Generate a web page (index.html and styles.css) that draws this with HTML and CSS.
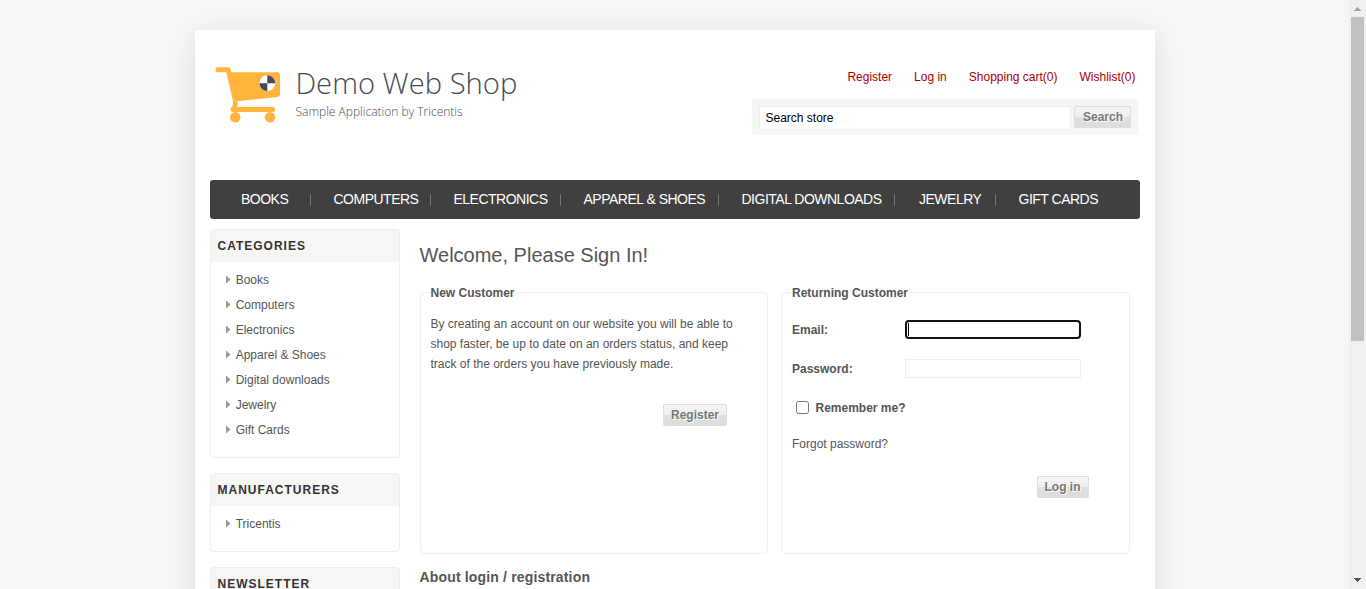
FILE: index.html
```html
<!DOCTYPE html>
<html lang="en">
<head>
<meta charset="utf-8">
<title>Demo Web Shop. Login</title>
<link rel="stylesheet" href="styles.css">
</head>
<body>
<div class="viewport">
  <div class="page-area">
    <div class="page">
      <header class="header">
        <a class="logo">
          <svg class="logo-cart" width="66" height="58" viewBox="0 0 66 58">
            <g fill="#ffb43b">
              <path d="M3 1.300H13.200Q15 1.300 15.600 3L16.200 6.200H62.500Q65 6.200 65 8.700V28.600Q65 30.800 62.800 31L22.300 35.200Q23.300 38.500 21.800 41H57.500Q60 41 60 43.400Q60 46 57.500 46H18Q15.500 46 15.500 43.500Q15.500 41.500 17.200 40.300Q18.600 37.500 17.800 34.500L11.300 6.200H3Q.5 6.200 .5 3.700Q.5 1.300 3 1.300Z"/>
              <circle cx="20.300" cy="51.200" r="5.200"/>
              <circle cx="55" cy="51.200" r="5.200"/>
            </g>
            <circle cx="52.300" cy="17.200" r="7.900" fill="#fff"/>
            <path d="M52.300 17.200V9.300A7.900 7.900 0 0 1 60.200 17.200ZM52.300 17.200V25.100A7.900 7.900 0 0 1 44.400 17.200Z" fill="#464a58"/>
          </svg>
          <span class="logo-text">
            <span class="logo-name">Demo Web Shop</span>
            <span class="logo-tag">Sample Application by Tricentis</span>
          </span>
        </a>
        <div class="header-side">
          <ul class="header-links">
            <li><a>Register</a></li>
            <li><a>Log in</a></li>
            <li><a>Shopping cart(0)</a></li>
            <li><a>Wishlist(0)</a></li>
          </ul>
          <form class="search-box">
            <input class="search-input" type="text" value="Search store">
            <button class="button search-button" type="button">Search</button>
          </form>
        </div>
      </header>
      <nav>
        <ul class="menu">
          <li class="first"><span>Books</span></li>
          <li><span>Computers</span></li>
          <li><span>Electronics</span></li>
          <li><span>Apparel &amp; Shoes</span></li>
          <li><span>Digital downloads</span></li>
          <li class="wide"><span>Jewelry</span></li>
          <li><span>Gift Cards</span></li>
        </ul>
      </nav>
      <div class="columns">
        <aside class="sidebar">
          <section class="block">
            <h2 class="block-title">Categories</h2>
            <ul class="block-list">
              <li>Books</li>
              <li>Computers</li>
              <li>Electronics</li>
              <li>Apparel &amp; Shoes</li>
              <li>Digital downloads</li>
              <li>Jewelry</li>
              <li>Gift Cards</li>
            </ul>
          </section>
          <section class="block">
            <h2 class="block-title">Manufacturers</h2>
            <ul class="block-list">
              <li>Tricentis</li>
            </ul>
          </section>
          <section class="block">
            <h2 class="block-title">Newsletter</h2>
            <ul class="block-list"></ul>
          </section>
        </aside>
        <main class="content">
          <h1 class="page-title">Welcome, Please Sign In!</h1>
          <div class="customer-blocks">
            <section class="panel">
              <strong class="panel-title">New Customer</strong>
              <p class="panel-text">By creating an account on our website you will be able to shop faster, be up to date on an orders status, and keep track of the orders you have previously made.</p>
              <div class="panel-actions register-actions">
                <button class="button" type="button">Register</button>
              </div>
            </section>
            <section class="panel returning">
              <strong class="panel-title">Returning Customer</strong>
              <div class="field-row">
                <span class="field-label">Email:</span>
                <span class="field focused"><span class="caret"></span></span>
              </div>
              <div class="field-row">
                <span class="field-label">Password:</span>
                <span class="field"></span>
              </div>
              <label class="remember"><input class="checkbox" type="checkbox">Remember me?</label>
              <a class="forgot">Forgot password?</a>
              <div class="panel-actions login-actions">
                <button class="button" type="button">Log in</button>
              </div>
            </section>
          </div>
          <h3 class="topic-title">About login / registration</h3>
        </main>
      </div>
    </div>
  </div>
  <div class="scrollbar">
    <svg class="arrow" width="17" height="17" shape-rendering="crispEdges"><path d="M8 7h1v1h1v1h1v1h1v1H5v-1h1V9h1V8h1z" fill="#a3a3a3"/></svg>
    <div class="thumb"></div>
    <svg class="arrow arrow-down" width="17" height="17" shape-rendering="crispEdges"><path d="M5 6h7v1h-1v1h-1v1H9v1H8V9H7V8H6V7H5z" fill="#505050"/></svg>
  </div>
</div>
</body>
</html>
```
FILE: styles.css
```css
* { box-sizing: border-box; margin: 0; padding: 0; }
ul { list-style: none; }
body {
  background: #f6f6f5;
  color: #555;
  font: 12px/20px "Liberation Sans", Arial, sans-serif;
}
.viewport { display: flex; height: 589px; overflow: hidden; }

.page-area { flex: 1; padding-top: 30px; overflow: hidden; }
.page {
  width: 960px;
  height: 700px;
  margin: 0 auto;
  padding: 0 15px;
  background: #fff;
  box-shadow: 0 5px 25px rgba(0, 0, 0, .09);
}

/* Header */
.header { display: flex; justify-content: space-between; height: 150px; }
.logo { display: flex; padding: 36px 0 0 5px; }
.logo-text {
  display: flex;
  flex-direction: column;
  padding-left: 15px;
  font-family: "Open Sans", sans-serif;
  font-weight: 300;
  color: #464a58;
}
.logo-name { font-size: 29.2px; line-height: 34px; white-space: nowrap; }
.logo-tag { font-size: 12px; line-height: 16px; padding-top: 4px; white-space: nowrap; }
.header-side { width: 386px; margin-right: 2px; padding-top: 37px; }
.header-links { display: flex; justify-content: flex-end; gap: 22px; padding-right: 2px; color: #a00; }
.search-box {
  display: flex;
  gap: 3px;
  align-items: flex-start;
  height: 36px;
  margin-top: 12px;
  padding: 7px;
  border-radius: 3px;
  background: #f6f6f5;
}
.search-input {
  width: 312px;
  height: 24px;
  padding: 0 6px;
  border: 1px solid #eee;
  background: #fff;
  color: #000;
  font: 12px "Liberation Sans", Arial, sans-serif;
}
.button {
  height: 22px;
  padding: 0 7px 1px;
  border: 1px solid #ddd;
  border-radius: 2px;
  background: linear-gradient(#f6f6f6 0%, #eee 49%, #e0e0e0 51%, #dcdcdc 100%);
  color: #777;
  font: bold 12px "Liberation Sans", Arial, sans-serif;
  text-shadow: 1px 1px 0 #fff;
}
.search-button { width: 57px; padding: 0 0 1px 2px; }

/* Menu */
.menu {
  display: grid;
  grid-template-columns: 101px 120px 130px 158px 176px 101px 1fr;
  align-items: center;
  height: 39px;
  border-radius: 3px;
  background: #404040;
  color: #fff;
  font-size: 14px;
  letter-spacing: -.5px;
  line-height: 12px;
  text-transform: uppercase;
}
.menu li { height: 12px; padding-left: 23px; border-right: 1px solid #777; white-space: nowrap; }
.menu span { display: block; margin-top: -1px; }
.menu .first { padding-left: 31.5px; }
.menu .wide { padding-left: 24.5px; }
.menu li:last-child { border: 0; }

/* Sidebar */
.columns { display: flex; gap: 20px; padding-top: 10px; }
.sidebar { width: 190px; display: flex; flex-direction: column; gap: 15px; }
.block { border: 1px solid #eee; border-radius: 4px; overflow: hidden; }
.block-title {
  height: 32px;
  padding-left: 7px;
  background: #f6f6f5;
  color: #333;
  font-size: 12px;
  line-height: 32px;
  letter-spacing: 1px;
  text-transform: uppercase;
}
.block-list { padding: 5px 15px 15px; }
.block-list li { display: flex; align-items: center; gap: 5.2px; height: 25px; }
.block-list li::before {
  content: "";
  width: 5px;
  height: 9px;
  background: #999;
  clip-path: polygon(0 0, 100% 50%, 0 100%);
}

/* Sign in */
.content { width: 711px; }
.page-title { padding-top: 12px; font-size: 20px; font-weight: normal; line-height: 28px; }
.customer-blocks { display: grid; grid-template-columns: 348px 349px; gap: 13px; padding-top: 23px; }
.panel { height: 262px; padding: 0 10px; border: 1px solid #eee; border-radius: 5px; }
.returning { padding-left: 10.5px; }
.panel-title { display: block; width: max-content; margin-top: -10px; padding-right: 1px; background: #fff; }
.panel-text { padding-top: 11px; width: 310px; }
.panel-actions { display: flex; justify-content: flex-end; }
.register-actions { padding: 30px 30px 0 0; }
.login-actions { padding: 22px 30px 0 0; }
.register-actions .button { width: 64px; padding: 0 0 1px 1px; }
.field-row { display: flex; align-items: center; height: 39px; }
.panel-title + .field-row { margin-top: 7px; }
.field-label { width: 112.5px; font-weight: bold; }
.field { width: 176px; height: 19px; border: 1px solid #eee; }
.field.focused { border: 2px solid #101010; border-radius: 4px; padding: 1px; }
.caret { display: block; width: 1px; height: 13px; background: #000; }
.remember { display: flex; align-items: center; height: 39px; font-weight: bold; }
.checkbox { width: 13px; height: 13px; margin: 0 6.5px 0 4px; }
.forgot { display: block; padding-top: 7px; }
.topic-title { padding-top: 13px; font-size: 14px; letter-spacing: .16px; }

/* Scrollbar */
.scrollbar { display: flex; flex-direction: column; width: 17px; background: #f0f0f0; }
.arrow { display: block; flex: none; }
.arrow-down { margin-top: auto; }
.thumb { width: 13px; height: 324px; margin-left: 2px; background: #c1c1c1; }
```
